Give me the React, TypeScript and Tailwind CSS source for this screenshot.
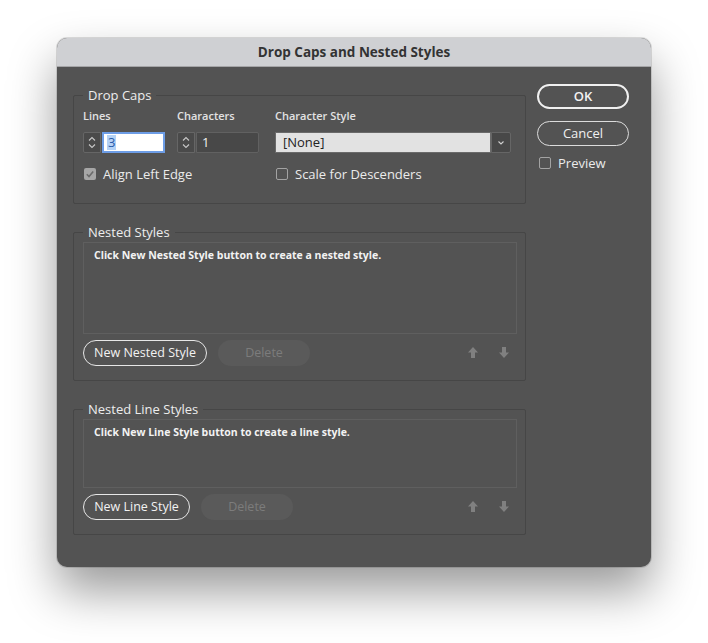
import React from "react";

const font = { fontFamily: '"Open Sans", "Noto Sans", sans-serif' };

function Spinner() {
  return (
    <div className="w-[18px] h-[21px] border border-[#666666] bg-[#4a4a4a] rounded-l-[2px] shrink-0">
      <svg width="16" height="19" viewBox="0 0 16 19" className="block">
        <path d="M5 7.5 L8 4.5 L11 7.5" fill="none" stroke="#c8c8c8" strokeWidth="1.1" />
        <path d="M5 11.5 L8 14.5 L11 11.5" fill="none" stroke="#c8c8c8" strokeWidth="1.1" />
      </svg>
    </div>
  );
}

function Check({ checked, label }: { checked?: boolean; label: string }) {
  return (
    <div className="flex items-center h-[16px]">
      {checked ? (
        <div className="w-[12px] h-[12px] rounded-[2px] bg-[#a6a6a6] shrink-0">
          <svg width="12" height="12" viewBox="0 0 12 12" className="block">
            <path d="M2.8 6.3 L5 8.5 L9.2 3.6" fill="none" stroke="#6b6b6b" strokeWidth="1.6" />
          </svg>
        </div>
      ) : (
        <div className="w-[12px] h-[12px] rounded-[2px] border border-[#a3a3a3] shrink-0" />
      )}
      <span className="ml-[7px] text-[13px] leading-[16px] font-medium text-[#ebebeb]">{label}</span>
    </div>
  );
}

function UpArrow() {
  return (
    <svg width="10" height="12" viewBox="0 0 10 12" className="block">
      <polygon points="5,0 10,5.5 7,5.5 7,11 3,11 3,5.5 0,5.5" fill="#808080" />
    </svg>
  );
}

function DownArrow() {
  return (
    <svg width="10" height="12" viewBox="0 0 10 12" className="block">
      <polygon points="3,0 7,0 7,5.5 10,5.5 5,11 0,5.5 3,5.5" fill="#808080" />
    </svg>
  );
}

function ListGroup({
  title,
  message,
  boxH,
  btn,
  btnW,
}: {
  title: string;
  message: string;
  boxH: string;
  btn: string;
  btnW: string;
}) {
  return (
    <fieldset className="mt-[20px] border border-[#464646] rounded-[2px]">
      <legend className="ml-[9px] px-[5px] text-[13px] leading-[16px] font-medium text-[#ededed]">{title}</legend>
      <div className="pl-[9px] pr-[8px] pt-[2px] pb-[14px]">
        <div className={`${boxH} border border-[#5f5f5f] pl-[10px] pt-[5px]`}>
          <div className="text-[10.5px] leading-[14px] font-bold text-[#f2f2f2]">{message}</div>
        </div>
        <div className="mt-[6px] flex items-center">
          <button
            className={`${btnW} h-[26px] rounded-full border-[1.5px] border-[#e6e6e6] text-[12.5px] font-medium text-[#f2f2f2] flex items-center justify-center`}
          >
            {btn}
          </button>
          <button className="ml-[11px] w-[92px] h-[26px] rounded-full bg-[#5a5a5a] text-[12.5px] font-medium text-[#7c7c7c] flex items-center justify-center">
            Delete
          </button>
          <div className="ml-auto flex items-center gap-[21px] pr-[8px]">
            <UpArrow />
            <DownArrow />
          </div>
        </div>
      </div>
    </fieldset>
  );
}

export default function App() {
  return (
    <div className="w-[708px] h-[643px] bg-white pt-[38px] pl-[57px]" style={font}>
      <div className="w-[594px] h-[529px] rounded-[10px] overflow-hidden bg-[#535353] flex flex-col shadow-[0_0_0_1px_rgba(0,0,0,0.12),0_24px_48px_rgba(0,0,0,0.4)]">
        <div className="h-[29px] shrink-0 bg-[#cfd0d3] border-b border-[#a5a5a7] flex items-center justify-center text-[13.5px] font-bold text-[#333333]">
          Drop Caps and Nested Styles
        </div>
        <div className="flex gap-[11px] pl-[16px] pr-[22px]">
          <div className="w-[453px] flex flex-col">
            <fieldset className="mt-[20px] border border-[#464646] rounded-[2px]">
              <legend className="ml-[9px] px-[5px] text-[13px] leading-[16px] font-medium text-[#ededed]">Drop Caps</legend>
              <div className="pl-[9px] pr-[13px] pt-[6px] pb-[21px]">
                <div className="grid grid-cols-[94px_98px_236px]">
                  <div className="flex flex-col">
                    <div className="h-[14px] text-[11px] leading-[14px] font-semibold text-[#e2e2e2]">Lines</div>
                    <div className="mt-[9px] flex w-[82px]">
                      <Spinner />
                      <div className="ml-px w-[63px] h-[21px] bg-white border-2 border-[#6d9de6] flex items-center pl-[3px]">
                        <span className="bg-[#b4d2f6] text-[#2a5aa8] text-[13px] leading-[15px] px-px">3</span>
                      </div>
                    </div>
                  </div>
                  <div className="flex flex-col">
                    <div className="h-[14px] text-[11px] leading-[14px] font-semibold text-[#e2e2e2]">Characters</div>
                    <div className="mt-[9px] flex w-[82px]">
                      <Spinner />
                      <div className="ml-px w-[63px] h-[21px] bg-[#484848] border border-[#616161] rounded-r-[2px] flex items-center pl-[5px] text-[13px] font-medium text-[#f0f0f0]">
                        1
                      </div>
                    </div>
                  </div>
                  <div className="flex flex-col">
                    <div className="h-[14px] text-[11px] leading-[14px] font-semibold text-[#e2e2e2]">Character Style</div>
                    <div className="mt-[9px] flex w-[236px] h-[21px]">
                      <div className="flex-1 bg-[#e2e2e2] border border-[#6a6a6a] flex items-center pl-[7px] text-[13px] font-medium text-[#222222]">
                        [None]
                      </div>
                      <div className="w-[20px] bg-[#484848] border border-[#666666] rounded-r-[2px]">
                        <svg width="18" height="19" viewBox="0 0 18 19" className="block">
                          <path d="M6.5 8.5 L9 11 L11.5 8.5" fill="none" stroke="#cfcfcf" strokeWidth="1.1" />
                        </svg>
                      </div>
                    </div>
                  </div>
                  <div className="col-span-2 mt-[13px] pl-px">
                    <Check checked label="Align Left Edge" />
                  </div>
                  <div className="mt-[13px] pl-px">
                    <Check label="Scale for Descenders" />
                  </div>
                </div>
              </div>
            </fieldset>
            <ListGroup
              title="Nested Styles"
              message="Click New Nested Style button to create a nested style."
              boxH="h-[92px]"
              btn="New Nested Style"
              btnW="w-[124px]"
            />
            <ListGroup
              title="Nested Line Styles"
              message="Click New Line Style button to create a line style."
              boxH="h-[69px]"
              btn="New Line Style"
              btnW="w-[107px]"
            />
          </div>
          <div className="w-[92px] flex flex-col">
            <button className="mt-[17px] h-[25px] rounded-full border-2 border-[#f0f0f0] text-[13px] font-semibold text-[#f2f2f2] flex items-center justify-center">
              OK
            </button>
            <button className="mt-[12px] h-[25px] rounded-full border border-[#dcdcdc] text-[13px] font-medium text-[#f0f0f0] flex items-center justify-center">
              Cancel
            </button>
            <div className="mt-[9px] pl-[2px]">
              <Check label="Preview" />
            </div>
          </div>
        </div>
      </div>
    </div>
  );
}
